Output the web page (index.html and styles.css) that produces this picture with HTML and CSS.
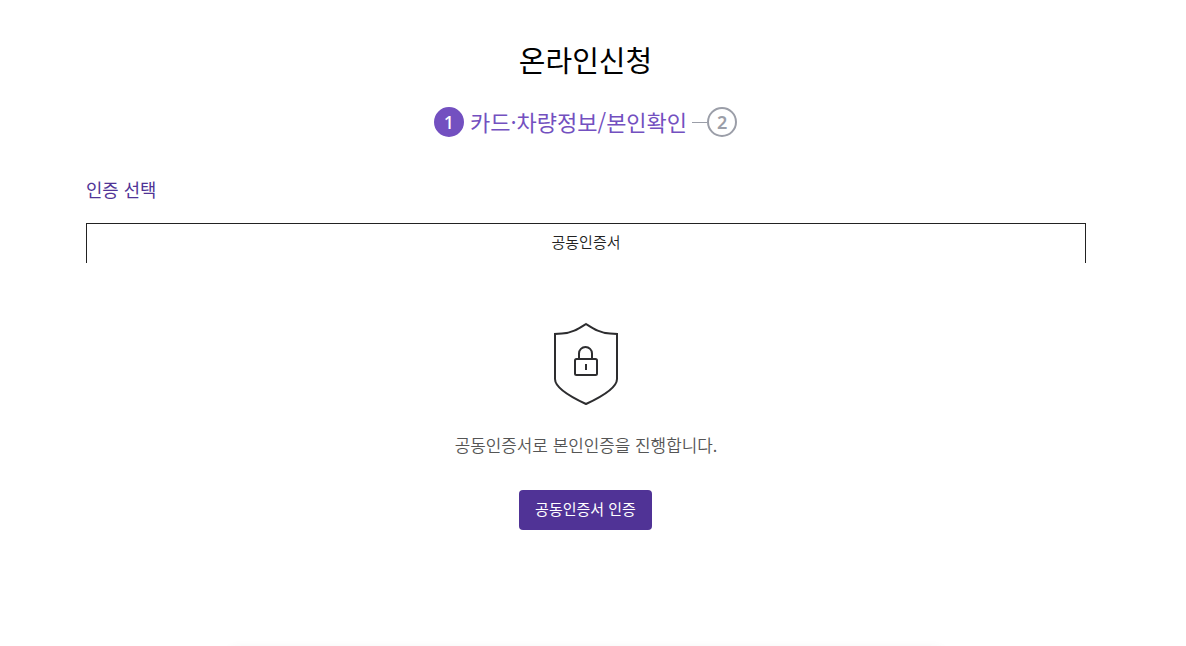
FILE: index.html
```html
<!DOCTYPE html>
<html lang="ko">
<head>
    <meta charset="UTF-8">
    <meta name="viewport" content="width=device-width, initial-scale=1.0">
    <title>온라인신청</title>
    <link rel="stylesheet" href="styles.css">
</head>
<body>
    <div id="wrap">
        <h1 class="title">온라인신청</h1>
        <ol class="step">
            <li class="on"><span class="num">1</span><strong>카드·차량정보/본인확인</strong></li>
            <li><span class="num">2</span></li>
        </ol>
        <div class="content">
            <h2 class="subtitle">인증 선택</h2>
            <ul class="tab">
                <li><a href="#cert">공동인증서</a></li>
            </ul>
            <div class="cert" id="cert">
                <svg class="shield" width="66" height="84" viewBox="0 0 66 84" fill="none" stroke="#2d2d2f" stroke-width="2">
                    <path d="M33 2C25 7 19 11 9 11.500L2 12V57C2 66 20 76 33 82C46 76 64 66 64 57V12L57 11.500C47 11 41 7 33 2Z"/>
                    <rect x="22" y="37" width="22" height="16" rx="1.5"/>
                    <path d="M26 37V31.500a6.500 6.500 0 0 1 13 0V37M33 42v6"/>
                </svg>
                <p>공동인증서로 본인인증을 진행합니다.</p>
                <button type="button" class="btn">공동인증서 인증</button>
            </div>
        </div>
        <div class="notice"></div>
    </div>
</body>
</html>
```

FILE: styles.css
```css
* { margin:0; padding:0; box-sizing:border-box;}
ul,ol,li { list-style:none;}
a { color:inherit; text-decoration:none;}

body { background-color:#fff; font-family:"Noto Sans CJK KR", sans-serif; color:#222;}
#wrap { width:1171px; height:646px; padding-top:37px; overflow:hidden;}

.title { height:44px; line-height:44px; font-size:29px; font-weight:400; color:#000; text-align:center;}

.step { display:flex; justify-content:center; margin-top:26px; height:30px;}
.step li { display:flex; align-items:center;}
.step li + li::before { content:""; width:15px; height:1px; margin-left:5px; background-color:#9b9ea8;}
.step .num { width:30px; height:30px; line-height:26px; border:2px solid #9b9ea8; border-radius:50%; font-family:"Noto Sans", sans-serif; font-size:18px; font-weight:600; color:#9b9ea8; text-align:center;}
.step .on .num { border-color:#7350c0; background-color:#7350c0; font-weight:500; color:#fff;}
.step strong { margin-left:6px; padding-bottom:2px; font-size:22px; line-height:28px; font-weight:400; color:#7350c0;}

.content { width:1000px; margin:0 0 0 86px;}
.subtitle { margin-top:38px; height:28px; line-height:28px; font-size:17.8px; font-weight:400; color:#503396;}
.tab { margin-top:20px;}
.tab a { display:block; height:40px; line-height:36px; border:1px solid #222; border-bottom:0; font-size:15px; font-weight:350; text-align:center;}

.cert { display:flex; flex-direction:column; align-items:center; padding-top:59px;}
.cert p { margin-top:27px; height:24px; line-height:24px; font-size:16.9px; font-weight:350; color:#555;}
.btn { width:133px; height:40px; margin:33px 1px 0 0; padding-bottom:2px; border:0; border-radius:4px; background-color:#503396; font-family:inherit; font-size:15px; line-height:38px; color:#fff;}

.notice { width:716px; height:60px; margin:120px auto 0; border-radius:10px; box-shadow:0 0 12px rgba(0,0,0,0.08);}
```
